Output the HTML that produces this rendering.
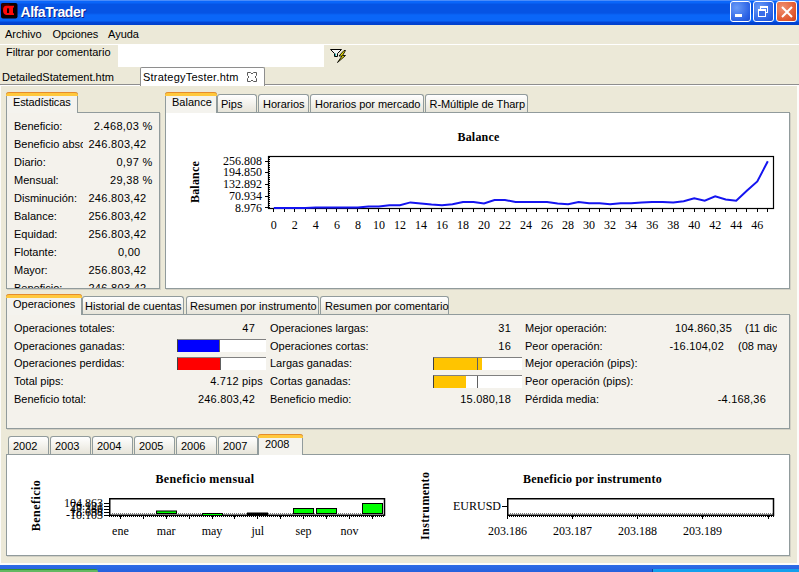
<!DOCTYPE html>
<html><head><meta charset="utf-8">
<style>
*{margin:0;padding:0;box-sizing:border-box}
html,body{width:799px;height:572px;overflow:hidden}
body{position:relative;background:#ECE9D8;font-family:"Liberation Sans",sans-serif;font-size:11px;color:#000}
.a{position:absolute;white-space:nowrap}
.t{position:absolute;white-space:nowrap;line-height:13px}
.r{text-align:right}
.rt{transform:translateX(-100%);letter-spacing:.2px;margin-left:1px}
#stats .rt{letter-spacing:.3px;margin-left:1.5px}
.serif{font-family:"Liberation Serif",serif}
/* title bar */
#title{left:0;top:0;width:799px;height:25px;background:linear-gradient(#4A8CFA 0,#4A8CFA 1px,#0A66FA 1px,#0A66FA 3px,#0654E4 4px,#0654E4 13px,#0A66F8 15px,#0A66F8 21px,#0446D6 22px,#0040CC 25px)}
.wbtn{position:absolute;top:1px;width:21px;height:21px;border:1px solid #fff;border-radius:3px;background:radial-gradient(circle at 30% 30%,#6A9CF8,#2B62E4 70%,#1E4FD0)}
/* tabs */
.tabA{position:absolute;background:#F4F3EE;border:1px solid #919B9C;border-bottom:none;border-top:none;border-radius:3px 3px 0 0}
.tabA:before{content:"";position:absolute;left:-1px;right:-1px;top:0;height:3px;background:#FFC83C;border-top:1px solid #E68B2C;border-radius:3px 3px 0 0}
.tabI{position:absolute;background:linear-gradient(#FFFFFF,#F4F3EE 45%,#E6E4D9);border:1px solid #919B9C;border-bottom:none;border-radius:3px 3px 0 0}
.pane{position:absolute;border:1px solid #919B9C;background:#F4F2EC;box-shadow:1px 1px 0 #D2D0C4}
</style></head><body>

<!-- TITLE BAR -->
<div id="title" class="a">
  <svg class="a" style="left:1px;top:3px" width="17" height="16"><rect x="0" y="0" width="16.5" height="15.5" rx="2" fill="#0A0000"/><rect x="0.5" y="0.5" width="8" height="6" fill="#3A0000"/><path d="M5.5 2.7H13V4.5H12V10.2H13V12H5.5C3 12 2 10 2 7.35C2 4.7 3 2.7 5.5 2.7ZM6 5.2H8.1V10H6Z" fill="#FF0A0A" fill-rule="evenodd"/></svg>
  <div class="t" style="left:20.5px;top:5px;font-weight:bold;font-size:14px;letter-spacing:-0.45px;line-height:15px;color:#fff;text-shadow:1px 1px #0A1E8C">AlfaTrader</div>
  <div class="wbtn" style="left:730px"><div class="a" style="left:4px;top:12px;width:7px;height:3px;background:#fff"></div></div>
  <div class="wbtn" style="left:753px"><div class="a" style="left:6px;top:4px;width:8px;height:7px;border:1px solid #fff;border-top-width:2px"></div><div class="a" style="left:4px;top:7px;width:8px;height:8px;border:1px solid #fff;border-top-width:2px;background:#3A6EE8"></div></div>
  <div class="wbtn" style="left:776px;background:radial-gradient(circle at 30% 30%,#F09070,#E0582E 70%,#C84020)"><svg class="a" style="left:4px;top:4px" width="12" height="12"><path d="M1 1L11 11M11 1L1 11" stroke="#fff" stroke-width="2"/></svg></div>
</div>

<!-- MENU -->
<div class="t" style="left:5px;top:28px">Archivo</div>
<div class="t" style="left:52.5px;top:28px;letter-spacing:-0.1px">Opciones</div>
<div class="t" style="left:108px;top:28px">Ayuda</div>
<div class="a" style="left:0;top:44px;width:799px;height:1px;background:#fff"></div>

<!-- FILTER ROW -->
<div class="t" style="left:6px;top:46px">Filtrar por comentario</div>
<div class="a" style="left:118px;top:44px;width:206px;height:23px;background:#fff"></div>
<svg class="a" style="left:329px;top:48px" width="18" height="16">
  <path d="M1.5 1.5H12.5L8.5 5.5V8.5H5.5V5.5Z" fill="#F4F4F4" stroke="#000" stroke-width="1"/>
  <path d="M6.5 5.5V8" stroke="#30B0B0" stroke-width="1.2"/>
  <path d="M15 2.5L10 8H13L8.5 14.5L16.5 7.5H13.5L16.5 2.5Z" fill="#F0E400" stroke="#000" stroke-width="0.9" stroke-linejoin="round"/>
</svg>

<!-- DOC TABS -->
<div class="a" style="left:0;top:84px;width:799px;height:1px;background:#8E8E8E"></div>
<div class="a" style="left:0;top:85px;width:799px;height:1px;background:#fff"></div>
<div class="t" style="left:2px;top:71px">DetailedStatement.htm</div>
<div class="a" style="left:140px;top:67px;width:125px;height:19px;background:#fff;border:1px solid #8E8E8E;border-bottom:none;border-radius:2px 2px 0 0"></div>
<div class="t" style="left:143px;top:71px;letter-spacing:.22px">StrategyTester.htm</div>
<svg class="a" style="left:246px;top:71px" width="13" height="13"><path d="M1.5 1.5H4.5L6 3L7.5 1.5H10.5V4.5L9 6L10.5 7.5V10.5H7.5L6 9L4.5 10.5H1.5V7.5L3 6L1.5 4.5Z" fill="#fff" stroke="#5A5A5A" stroke-width="1"/></svg>

<!-- ESTADISTICAS -->
<div class="pane" style="left:6px;top:112px;width:154px;height:177px"></div>
<div class="tabA" style="left:6px;top:92px;width:72px;height:21px"></div>
<div class="t" style="left:13px;top:96px;letter-spacing:-.15px">Estadísticas</div>
<div id="stats" class="a" style="left:7px;top:113px;width:152px;height:175px;overflow:hidden">
  <div class="t" style="left:7px;top:7px">Beneficio:</div><div class="t rt" style="left:144px;top:7px">2.468,03 %</div>
  <div class="t" style="left:7px;top:25px;width:69px;overflow:hidden">Beneficio absoluto:</div><div class="t rt" style="left:138px;top:25px">246.803,42</div>
  <div class="t" style="left:7px;top:43px">Diario:</div><div class="t rt" style="left:144px;top:43px">0,97 %</div>
  <div class="t" style="left:7px;top:61px">Mensual:</div><div class="t rt" style="left:144px;top:61px">29,38 %</div>
  <div class="t" style="left:7px;top:79px">Disminución:</div><div class="t rt" style="left:138px;top:79px">246.803,42</div>
  <div class="t" style="left:7px;top:97px">Balance:</div><div class="t rt" style="left:138px;top:97px">256.803,42</div>
  <div class="t" style="left:7px;top:115px">Equidad:</div><div class="t rt" style="left:138px;top:115px">256.803,42</div>
  <div class="t" style="left:7px;top:133px">Flotante:</div><div class="t rt" style="left:132px;top:133px">0,00</div>
  <div class="t" style="left:7px;top:151px">Mayor:</div><div class="t rt" style="left:138px;top:151px">256.803,42</div>
  <div class="t" style="left:7px;top:169px">Beneficio:</div><div class="t rt" style="left:138px;top:169px">246.803,42</div>
</div>

<!-- BALANCE TABS -->
<div class="pane" style="left:165px;top:112px;width:625px;height:177px;background:#fff"></div>
<div class="tabI" style="left:217px;top:94px;width:40px;height:18px"></div>
<div class="tabI" style="left:258px;top:94px;width:51px;height:18px"></div>
<div class="tabI" style="left:310px;top:94px;width:114px;height:18px"></div>
<div class="tabI" style="left:425px;top:94px;width:103px;height:18px"></div>
<div class="tabA" style="left:165px;top:92px;width:52px;height:21px"></div>
<div class="t" style="left:172px;top:96px">Balance</div>
<div class="t" style="left:221px;top:98px">Pips</div>
<div class="t" style="left:263px;top:98px">Horarios</div>
<div class="t" style="left:315px;top:98px;letter-spacing:-.05px">Horarios por mercado</div>
<div class="t" style="left:429.5px;top:98px;letter-spacing:-.05px">R-Múltiple de Tharp</div>

<!-- BALANCE CHART -->
<svg class="a" style="left:0;top:0" width="799" height="572" font-family="Liberation Serif" font-size="12">
<text x="478.5" y="141" text-anchor="middle" font-weight="bold" letter-spacing="0.2">Balance</text>
<text transform="translate(199,182) rotate(-90)" text-anchor="middle" font-weight="bold" letter-spacing="0.2">Balance</text>
<rect x="268.5" y="156.5" width="505" height="52" fill="#fff" stroke="#000" stroke-width="1.2"/><path d="M269.5 157V208" stroke="#000" stroke-width="1" stroke-dasharray="1 1"/>
<path d="M265 161.5H268M265 172.5H268M265 184.5H268M265 196.5H268M265 207.5H268M273.5 209V212M284.5 209V212M294.5 209V212M305.5 209V212M315.5 209V212M326.5 209V212M336.5 209V212M347.5 209V212M357.5 209V212M368.5 209V212M378.5 209V212M389.5 209V212M399.5 209V212M410.5 209V212M420.5 209V212M431.5 209V212M441.5 209V212M452.5 209V212M462.5 209V212M473.5 209V212M484.5 209V212M494.5 209V212M505.5 209V212M515.5 209V212M526.5 209V212M536.5 209V212M547.5 209V212M557.5 209V212M568.5 209V212M578.5 209V212M589.5 209V212M599.5 209V212M610.5 209V212M620.5 209V212M631.5 209V212M641.5 209V212M652.5 209V212M662.5 209V212M673.5 209V212M683.5 209V212M694.5 209V212M704.5 209V212M715.5 209V212M725.5 209V212M736.5 209V212M746.5 209V212M757.5 209V212M767.5 209V212" stroke="#000" stroke-width="1" fill="none"/>
<g text-anchor="end"><text x="262" y="165.0">256.808</text><text x="262" y="176.0">194.850</text><text x="262" y="188.0">132.892</text><text x="262" y="200.0">70.934</text><text x="262" y="212">8.976</text></g>
<g text-anchor="middle"><text x="273.8" y="229">0</text><text x="294.8" y="229">2</text><text x="315.8" y="229">4</text><text x="336.9" y="229">6</text><text x="357.9" y="229">8</text><text x="378.9" y="229">10</text><text x="399.9" y="229">12</text><text x="420.9" y="229">14</text><text x="442.0" y="229">16</text><text x="463.0" y="229">18</text><text x="484.0" y="229">20</text><text x="505.0" y="229">22</text><text x="526.0" y="229">24</text><text x="547.1" y="229">26</text><text x="568.1" y="229">28</text><text x="589.1" y="229">30</text><text x="610.1" y="229">32</text><text x="631.1" y="229">34</text><text x="652.2" y="229">36</text><text x="673.2" y="229">38</text><text x="694.2" y="229">40</text><text x="715.2" y="229">42</text><text x="736.2" y="229">44</text><text x="757.3" y="229">46</text></g>
<polyline points="273.8,208 284.3,208 294.8,208 305.3,208 315.8,207.4 326.4,207.4 336.9,207.4 347.4,207.4 357.9,207.4 368.4,206.6 378.9,206.6 389.4,205.3 399.9,205.3 410.4,202.4 420.9,203.4 431.5,204.5 442.0,205.3 452.5,204.2 463.0,202.1 473.5,202.1 484.0,203.4 494.5,200 505.0,200 515.5,202.1 526.0,202.1 536.5,202.1 547.1,202.1 557.6,203.4 568.1,204.2 578.6,202.1 589.1,203.2 599.6,203.2 610.1,204.2 620.6,203.2 631.1,203.2 641.6,202.4 652.2,202.1 662.7,202.1 673.2,202.4 683.7,201.2 694.2,198.2 704.7,200.7 715.2,196.3 725.7,199.4 736.2,200.7 746.8,190.7 757.3,181.4 767.8,161.3" fill="none" stroke="#1414F0" stroke-width="2"/>
</svg>

<!-- OPERACIONES -->
<div class="pane" style="left:6px;top:314px;width:784px;height:115px"></div>
<div class="tabI" style="left:82px;top:296px;width:102px;height:18px"></div>
<div class="tabI" style="left:186px;top:296px;width:133px;height:18px"></div>
<div class="tabI" style="left:320px;top:296px;width:129px;height:18px"></div>
<div class="tabA" style="left:6px;top:294px;width:76px;height:21px"></div>
<div class="t" style="left:13px;top:298px">Operaciones</div>
<div class="t" style="left:85px;top:300px">Historial de cuentas</div>
<div class="t" style="left:190px;top:300px">Resumen por instrumento</div>
<div class="t" style="left:325px;top:300px">Resumen por comentario</div>

<div class="t" style="left:14px;top:322px">Operaciones totales:</div>
<div class="t" style="left:14px;top:340px">Operaciones ganadas:</div>
<div class="t" style="left:14px;top:357px">Operaciones perdidas:</div>
<div class="t" style="left:14px;top:375px">Total pips:</div>
<div class="t" style="left:14px;top:393px">Beneficio total:</div>
<div class="t rt" style="left:254px;top:322px">47</div>
<div class="t rt" style="left:262px;top:375px">4.712 pips</div>
<div class="t rt" style="left:254px;top:393px">246.803,42</div>
<div class="a" style="left:177px;top:339px;width:89px;height:13px;background:#fff;border-top:1px solid #808080;border-left:1px solid #404040"></div>
<div class="a" style="left:178px;top:340px;width:42px;height:12px;background:#0000FF;border-right:1px solid #606060"></div>
<div class="a" style="left:177px;top:357px;width:89px;height:13px;background:#fff;border-top:1px solid #808080;border-left:1px solid #404040"></div>
<div class="a" style="left:178px;top:358px;width:43px;height:12px;background:#FF0000;border-right:1px solid #606060"></div>

<div class="t" style="left:270px;top:322px">Operaciones largas:</div>
<div class="t" style="left:270px;top:340px">Operaciones cortas:</div>
<div class="t" style="left:270px;top:357px">Largas ganadas:</div>
<div class="t" style="left:270px;top:375px">Cortas ganadas:</div>
<div class="t" style="left:270px;top:393px">Beneficio medio:</div>
<div class="t rt" style="left:510px;top:322px">31</div>
<div class="t rt" style="left:510px;top:340px">16</div>
<div class="t rt" style="left:510px;top:393px">15.080,18</div>
<div class="a" style="left:433px;top:357px;width:89px;height:13px;background:#fff;border-top:1px solid #808080;border-left:1px solid #404040"></div>
<div class="a" style="left:434px;top:358px;width:48px;height:12px;background:#FFC400"></div>
<div class="a" style="left:477px;top:358px;width:1px;height:12px;background:#606060"></div>
<div class="a" style="left:433px;top:375px;width:89px;height:13px;background:#fff;border-top:1px solid #808080;border-left:1px solid #404040"></div>
<div class="a" style="left:434px;top:376px;width:32px;height:12px;background:#FFC400"></div>
<div class="a" style="left:477px;top:376px;width:1px;height:12px;background:#606060"></div>

<div class="t" style="left:525px;top:322px">Mejor operación:</div>
<div class="t" style="left:525px;top:340px">Peor operación:</div>
<div class="t" style="left:525px;top:357px">Mejor operación (pips):</div>
<div class="t" style="left:525px;top:375px">Peor operación (pips):</div>
<div class="t" style="left:525px;top:393px">Pérdida media:</div>
<div class="t rt" style="left:731px;top:322px">104.860,35</div>
<div class="t rt" style="left:723px;top:340px">-16.104,02</div>
<div class="t rt" style="left:765px;top:393px">-4.168,36</div>
<div class="a" style="left:730px;top:318px;width:47px;height:40px;overflow:hidden">
  <div class="t" style="left:15px;top:4px">(11 dic 2008)</div>
  <div class="t" style="left:8px;top:22px">(08 may 2008)</div>
</div>

<!-- YEARS -->
<div class="pane" style="left:6px;top:454px;width:784px;height:102px;background:#fff"></div>
<div class="tabI" style="left:8px;top:436px;width:41px;height:18px"></div>
<div class="tabI" style="left:50px;top:436px;width:41px;height:18px"></div>
<div class="tabI" style="left:92px;top:436px;width:41px;height:18px"></div>
<div class="tabI" style="left:134px;top:436px;width:41px;height:18px"></div>
<div class="tabI" style="left:176px;top:436px;width:41px;height:18px"></div>
<div class="tabI" style="left:218px;top:436px;width:40px;height:18px"></div>
<div class="tabA" style="left:258px;top:434px;width:45px;height:21px"></div>
<div class="t" style="left:13px;top:440px">2002</div>
<div class="t" style="left:55px;top:440px">2003</div>
<div class="t" style="left:97px;top:440px">2004</div>
<div class="t" style="left:139px;top:440px">2005</div>
<div class="t" style="left:181px;top:440px">2006</div>
<div class="t" style="left:223px;top:440px">2007</div>
<div class="t" style="left:265px;top:438px">2008</div>

<!-- BOTTOM CHARTS -->
<svg class="a" style="left:0;top:0" width="799" height="572" font-family="Liberation Serif" font-size="12">
<text x="205" y="483" text-anchor="middle" font-weight="bold" letter-spacing="0.35">Beneficio mensual</text>
<text transform="translate(40,505.5) rotate(-90)" text-anchor="middle" font-weight="bold" letter-spacing="0.45">Beneficio</text>
<rect x="109.75" y="498.75" width="274.75" height="16.5" fill="#fff" stroke="#000" stroke-width="1.5"/>
<path d="M110 513.5H384" stroke="#777" stroke-width="1" stroke-dasharray="1 1" fill="none"/>
<path d="M109 516.5H385" stroke="#000" stroke-width="1" stroke-dasharray="1 1" fill="none"/>
<rect x="156.5" y="511" width="20" height="2.5" fill="#00FF00" stroke="#000" stroke-width="1"/><rect x="202.5" y="513.5" width="20" height="2.0" fill="#00FF00" stroke="#000" stroke-width="1"/><rect x="247.5" y="513" width="20" height="1.5" fill="#000" stroke="#000" stroke-width="1"/><rect x="293.5" y="508.5" width="20" height="5.0" fill="#00FF00" stroke="#000" stroke-width="1"/><rect x="316.5" y="508.5" width="20" height="5.0" fill="#00FF00" stroke="#000" stroke-width="1"/><rect x="362.5" y="503.5" width="20" height="10.0" fill="#00FF00" stroke="#000" stroke-width="1"/>
<path d="M120.5 516V519M143.5 516V519M166.5 516V519M189.5 516V519M212.5 516V519M234.5 516V519M257.5 516V519M280.5 516V519M303.5 516V519M326.5 516V519M349.5 516V519M372.5 516V519M104 503.5H109M104 506.5H109M104 509.5H109M104 512.5H109M104 515.5H109" stroke="#000" stroke-width="1" fill="none"/>
<g text-anchor="end"><text x="103" y="506.5">104.863</text><text x="103" y="509.5">76.121</text><text x="103" y="512.5">47.380</text><text x="103" y="515.5">18.638</text><text x="103" y="518.5">-10.103</text></g>
<g text-anchor="middle"><text x="120.4" y="535">ene</text><text x="166.2" y="535">mar</text><text x="212.0" y="535">may</text><text x="257.8" y="535">jul</text><text x="303.6" y="535">sep</text><text x="349.4" y="535">nov</text></g>
<text x="592.5" y="483" text-anchor="middle" font-weight="bold" letter-spacing="0.2">Beneficio por instrumento</text>
<text transform="translate(428.5,505.8) rotate(-90)" text-anchor="middle" font-weight="bold" letter-spacing="0.4">Instrumento</text>
<rect x="507.75" y="498.75" width="265.75" height="16.5" fill="#fff" stroke="#000" stroke-width="1.5"/>
<path d="M508 513.5H773" stroke="#777" stroke-width="1" stroke-dasharray="1 1" fill="none"/>
<path d="M507 516.5H774" stroke="#000" stroke-width="1" stroke-dasharray="1 1" fill="none"/>
<path d="M502 506.5H507M507.5 516V519M572.5 516V519M637.5 516V519M702.5 516V519M768.5 516V519" stroke="#000" stroke-width="1" fill="none"/>
<text x="501" y="510" text-anchor="end">EURUSD</text>
<g text-anchor="middle"><text x="507.5" y="535">203.186</text><text x="572.5" y="535">203.187</text><text x="637.5" y="535">203.188</text><text x="702.5" y="535">203.189</text></g>
</svg>



<!-- TASKBAR -->
<div class="a" style="left:0;top:563px;width:799px;height:2px;background:#FCFCFA"></div>
<div class="a" style="left:0;top:85px;width:1px;height:480px;background:#FCFCFA"></div>
<div class="a" style="left:797px;top:85px;width:2px;height:480px;background:#FCFCFA"></div>
<div class="a" style="left:0;top:565px;width:799px;height:7px;background:linear-gradient(#2E6CE6 0,#2A66E2 3px,#2560DC)"></div>
<div class="a" style="left:0;top:569px;width:98px;height:3px;background:linear-gradient(#2F8F2F 0,#2F8F2F 1px,#62B862 1px);border-radius:0 4px 0 0"></div>
<div class="a" style="left:652px;top:569px;width:147px;height:3px;background:#14A0EC;border-left:1px solid #1040A0"></div>
</body></html>
